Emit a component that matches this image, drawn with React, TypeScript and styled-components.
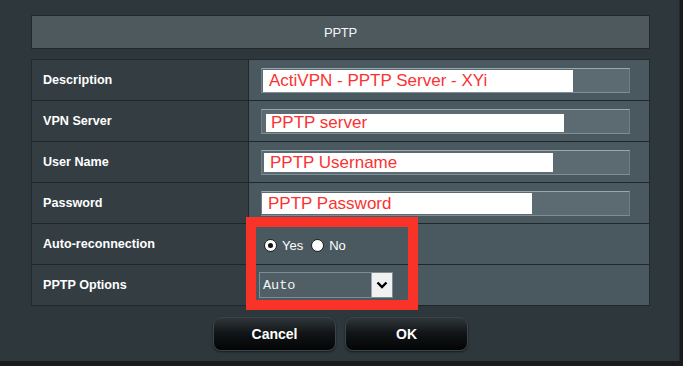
import { Fragment } from 'react';
import styled, { createGlobalStyle } from 'styled-components';

const Global = createGlobalStyle`
  html, body {
    margin: 0;
    padding: 0;
    background: #171b1d;
    font-family: "Liberation Sans", Arial, sans-serif;
  }
`;

const S = {
  Panel: styled.div`
    position: relative;
    box-sizing: border-box;
    width: 680px;
    height: 361px;
    padding: 15px 29px 0 31px;
    background: #2d373c;
    border-right: 1px solid #232a2d;
    display: flex;
    flex-direction: column;
  `,
  Header: styled.div`
    box-sizing: border-box;
    height: 34px;
    background: #4e595e;
    border: 1px solid #22292c;
    color: #f4f6f7;
    font-size: 13px;
    letter-spacing: -0.3px;
    display: flex;
    align-items: center;
    justify-content: center;
  `,
  Table: styled.div`
    margin-top: 10px;
    border: 1px solid #222a2d;
    border-bottom: none;
    display: grid;
    grid-template-columns: 217px 1fr;
  `,
  Label: styled.div`
    box-sizing: border-box;
    height: 41px;
    padding-left: 11px;
    background: #333d42;
    border-bottom: 1px solid #20272a;
    border-right: 1px solid #20272a;
    color: #ffffff;
    font-size: 12.6px;
    font-weight: bold;
    display: flex;
    align-items: center;
  `,
  Value: styled.div<{ $pad: number }>`
    box-sizing: border-box;
    height: 41px;
    padding-left: ${(p) => p.$pad}px;
    background: #4a595f;
    border-bottom: 1px solid #20272a;
    display: flex;
    align-items: center;
  `,
  Input: styled.div`
    box-sizing: border-box;
    width: 369px;
    height: 25px;
    background: #5b6b71;
    border: 1px solid #6f7f85;
    border-top-color: #98a7ac;
    border-bottom-color: #7f8e94;
    display: flex;
  `,
  Patch: styled.div<{ $w: number; $h: number; $x: number; $y: number }>`
    box-sizing: border-box;
    width: ${(p) => p.$w}px;
    height: ${(p) => p.$h}px;
    margin-left: ${(p) => p.$x}px;
    margin-top: ${(p) => p.$y}px;
    padding-left: ${(p) => (p.$x > 2 ? 5 : 6)}px;
    background: #ffffff;
    color: #fb3232;
    font-size: 17px;
    line-height: 1;
    white-space: nowrap;
    display: flex;
    align-items: center;
  `,
  Radios: styled.div`
    display: flex;
    align-items: center;
    gap: 8px;
    color: #ffffff;
    font-size: 13px;
    padding-top: 3px;
  `,
  RadioItem: styled.label`
    display: flex;
    align-items: center;
    gap: 5px;
  `,
  Radio: styled.span<{ $on?: boolean }>`
    box-sizing: border-box;
    width: 13px;
    height: 13px;
    border-radius: 50%;
    border: 1px solid #1c2224;
    background: radial-gradient(circle at 60% 35%, #ffffff 55%, #cfd4d6 100%);
    display: flex;
    align-items: center;
    justify-content: center;
    &::after {
      content: '';
      width: 5px;
      height: 5px;
      border-radius: 50%;
      background: #111;
      display: ${(p) => (p.$on ? 'block' : 'none')};
    }
  `,
  Select: styled.div`
    box-sizing: border-box;
    width: 134px;
    height: 26px;
    background: #4f5f65;
    border: 1px solid #7e8d93;
    display: flex;
    align-items: stretch;
  `,
  SelectText: styled.span`
    flex: 1;
    padding-left: 3px;
    color: #f2f4f5;
    font-family: "Liberation Mono", "Courier New", monospace;
    font-size: 13.5px;
    display: flex;
    align-items: center;
  `,
  Arrow: styled.span`
    width: 20px;
    background: #f1f1f1;
    border-left: 1px solid #9aa6aa;
    display: flex;
    align-items: center;
    justify-content: center;
  `,
  Buttons: styled.div`
    margin-top: 11px;
    display: flex;
    justify-content: center;
    gap: 9px;
  `,
  Button: styled.button`
    box-sizing: border-box;
    width: 123px;
    height: 34px;
    border-radius: 8px;
    border: 1px solid #3b4448;
    background: linear-gradient(#30373a 0%, #121618 45%, #030404 100%);
    box-shadow: 0 1px 2px rgba(0, 0, 0, 0.5);
    color: #ffffff;
    font-family: "Liberation Sans", Arial, sans-serif;
    font-size: 14px;
    font-weight: bold;
    padding: 0;
  `,
  Mark: styled.div`
    position: absolute;
    left: 246px;
    top: 217px;
    width: 172px;
    height: 93px;
    box-sizing: border-box;
    border: 10px solid #fa3328;
    pointer-events: none;
  `,
};

type Field = {
  label: string;
  text: string;
  w: number;
  h: number;
  x: number;
  y: number;
};

const fields: Field[] = [
  { label: 'Description', text: 'ActiVPN - PPTP Server - XYi', w: 310, h: 22, x: 1, y: 1 },
  { label: 'VPN Server', text: 'PPTP server', w: 298, h: 18, x: 4, y: 4 },
  { label: 'User Name', text: 'PPTP Username', w: 289, h: 19, x: 2, y: 2 },
  { label: 'Password', text: 'PPTP Password', w: 270, h: 21, x: 0, y: 1 },
];

const Chevron = () => (
  <svg width="12" height="8" viewBox="0 0 12 8">
    <path d="M1.5 1.5 L6 6 L10.5 1.5" fill="none" stroke="#000" strokeWidth="2.4" />
  </svg>
);

const App = () => {
  return (
    <>
      <Global />
      <S.Panel>
        <S.Header>PPTP</S.Header>
        <S.Table>
          {fields.map((f) => (
            <Fragment key={f.label}>
              <S.Label>{f.label}</S.Label>
              <S.Value $pad={12}>
                <S.Input>
                  <S.Patch $w={f.w} $h={f.h} $x={f.x} $y={f.y}>
                    {f.text}
                  </S.Patch>
                </S.Input>
              </S.Value>
            </Fragment>
          ))}
          <S.Label>Auto-reconnection</S.Label>
          <S.Value $pad={15}>
            <S.Radios>
              <S.RadioItem>
                <S.Radio $on />
                Yes
              </S.RadioItem>
              <S.RadioItem>
                <S.Radio />
                No
              </S.RadioItem>
            </S.Radios>
          </S.Value>
          <S.Label>PPTP Options</S.Label>
          <S.Value $pad={10}>
            <S.Select>
              <S.SelectText>Auto</S.SelectText>
              <S.Arrow>
                <Chevron />
              </S.Arrow>
            </S.Select>
          </S.Value>
        </S.Table>
        <S.Buttons>
          <S.Button>Cancel</S.Button>
          <S.Button>OK</S.Button>
        </S.Buttons>
        <S.Mark />
      </S.Panel>
    </>
  );
};

export default App;
